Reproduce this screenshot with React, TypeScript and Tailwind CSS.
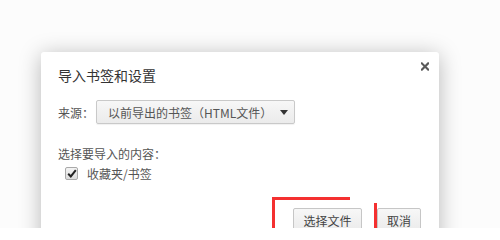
import React from "react";

export default function App() {
  const font = { fontFamily: '"Noto Sans CJK SC", "Noto Sans", sans-serif' };
  return (
    <div
      className="relative w-[500px] h-[228px] overflow-hidden bg-[#fcfcfc] pl-[41px] pt-[52px] whitespace-nowrap"
      style={font}
    >
      <div className="relative w-[398px] h-[220px] rounded-[3px] bg-white shadow-[0_3px_22px_rgba(0,0,0,0.28)] pl-[17px] pr-[18px] pt-[14px] text-[#444]">
        <button className="absolute right-[10px] top-[10px] w-[8px] h-[8px] flex items-center justify-center">
          <svg width="9" height="9" viewBox="0 0 9 9">
            <path d="M1 1 L8 8 M8 1 L1 8" stroke="#5a5a5a" strokeWidth="2.4" strokeLinecap="square" />
          </svg>
        </button>
        <div className="text-[14px] leading-[19px] text-[#333]">导入书签和设置</div>

        <div className="mt-[15px] flex items-center h-[24px]">
          <span className="shrink-0 text-[12px] leading-[17px] text-[#555] w-[38px]">来源：</span>
          <div className="shrink-0 flex items-center justify-between w-[199px] h-[24px] rounded-[2px] border border-[#c9c9c9] bg-gradient-to-b from-[#f7f7f7] to-[#ebebeb] pl-[11px] pr-[6px] shadow-[0_1px_1px_rgba(0,0,0,0.06)]">
            <span className="text-[12px] leading-[17px] text-[#555]">以前导出的书签（HTML文件）</span>
            <svg className="shrink-0" width="8" height="5" viewBox="0 0 8 5">
              <path d="M0 0 H8 L4 5 Z" fill="#333" />
            </svg>
          </div>
        </div>

        <div className="mt-[21px] text-[12px] leading-[17px] text-[#555]">选择要导入的内容：</div>

        <div className="mt-[3px] flex items-center pl-[7px] h-[17px]">
          <div className="shrink-0 w-[13px] h-[13px] rounded-[2px] border border-[#a9a9a9] bg-gradient-to-b from-[#f4f4f4] to-[#dcdcdc] flex items-center justify-center">
            <svg width="10" height="9" viewBox="0 0 10 9">
              <path d="M1.2 4.8 L3.8 7.4 L8.8 1.2" stroke="#222" strokeWidth="2" fill="none" />
            </svg>
          </div>
          <span className="ml-[9px] text-[12px] leading-[17px] text-[#555]">收藏夹/书签</span>
        </div>

        <div className="mt-[26px] flex justify-end gap-[15px]">
          <div className="w-[69px] h-[24px] rounded-[2px] border border-[#c6c6c6] bg-gradient-to-b from-[#f7f7f7] to-[#ebebeb] flex items-center justify-center text-[12px] leading-[17px] text-[#444]">
            选择文件
          </div>
          <div className="w-[44px] h-[24px] rounded-[2px] border border-[#c6c6c6] bg-gradient-to-b from-[#f7f7f7] to-[#ebebeb] flex items-center justify-center text-[12px] leading-[17px] text-[#444]">
            取消
          </div>
        </div>
      </div>

      {/* red annotation lines */}
      <div className="absolute left-[272px] top-[197px] w-[78px] h-[2.5px] bg-[#f43030]" />
      <div className="absolute left-[272px] top-[197px] w-[2.5px] h-[40px] bg-[#f43030]" />
      <div className="absolute left-[374px] top-[203px] w-[2.5px] h-[40px] bg-[#f43030]" />
    </div>
  );
}
